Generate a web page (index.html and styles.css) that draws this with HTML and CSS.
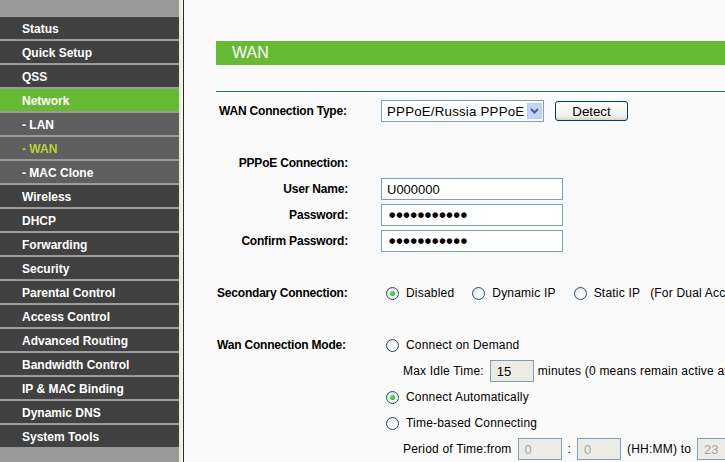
FILE: index.html
```html
<!DOCTYPE html>
<html lang="en">

<head>
    <meta charset="UTF-8">
    <title>WAN</title>
    <link rel="stylesheet" href="styles.css">
</head>

<body>
    <div class="menu">
        <div class="menu_top"></div>
        <a class="menu_item" href="#">Status</a>
        <a class="menu_item" href="#">Quick Setup</a>
        <a class="menu_item" href="#">QSS</a>
        <a class="menu_item menu_active" href="#">Network</a>
        <a class="menu_item menu_sub" href="#">- LAN</a>
        <a class="menu_item menu_sub sub_active" href="#">- WAN</a>
        <a class="menu_item menu_sub" href="#">- MAC Clone</a>
        <a class="menu_item" href="#">Wireless</a>
        <a class="menu_item" href="#">DHCP</a>
        <a class="menu_item" href="#">Forwarding</a>
        <a class="menu_item" href="#">Security</a>
        <a class="menu_item" href="#">Parental Control</a>
        <a class="menu_item" href="#">Access Control</a>
        <a class="menu_item" href="#">Advanced Routing</a>
        <a class="menu_item" href="#">Bandwidth Control</a>
        <a class="menu_item" href="#">IP &amp; MAC Binding</a>
        <a class="menu_item" href="#">Dynamic DNS</a>
        <a class="menu_item" href="#">System Tools</a>
    </div>
    <div class="menu_edge"></div>

    <div class="main">
        <div class="panel">
            <div class="panel_title">WAN</div>
            <div class="panel_line"></div>

            <div class="row">
                <div class="label left">WAN Connection Type:</div>
                <div class="field">
                    <div class="select">
                        <span class="select_text">PPPoE/Russia PPPoE</span>
                        <span class="select_btn">
                            <svg width="9" height="6" viewBox="0 0 9 6">
                                <polyline points="1,1 4.5,4.5 8,1" fill="none" stroke="#4d6185" stroke-width="2" />
                            </svg>
                        </span>
                    </div>
                    <button type="button" class="btn">Detect</button>
                </div>
            </div>
            <div class="row"></div>

            <div class="row">
                <div class="label">PPPoE Connection:</div>
            </div>
            <div class="row">
                <div class="label">User Name:</div>
                <div class="field"><input class="text" type="text" value="U000000"></div>
            </div>
            <div class="row">
                <div class="label">Password:</div>
                <div class="field"><div class="text dots">●●●●●●●●●●●</div></div>
            </div>
            <div class="row">
                <div class="label">Confirm Password:</div>
                <div class="field"><div class="text dots">●●●●●●●●●●●</div></div>
            </div>
            <div class="row"></div>

            <div class="row">
                <div class="label flush">Secondary Connection:</div>
                <div class="field">
                    <span class="radio checked"></span><span class="opt">Disabled</span>
                    <span class="radio"></span><span class="opt">Dynamic IP</span>
                    <span class="radio"></span><span class="opt">Static IP</span>
                    <span class="note">(For Dual Access/Russia PPPoE)</span>
                </div>
            </div>
            <div class="row"></div>

            <div class="row">
                <div class="label flush">Wan Connection Mode:</div>
                <div class="field">
                    <span class="radio"></span><span class="opt">Connect on Demand</span>
                </div>
            </div>
            <div class="row">
                <div class="label"></div>
                <div class="field sub">
                    Max Idle Time:
                    <input class="small idle" type="text" value="15">
                    minutes (0 means remain active at all times.)
                </div>
            </div>
            <div class="row">
                <div class="label"></div>
                <div class="field">
                    <span class="radio checked"></span><span class="opt">Connect Automatically</span>
                </div>
            </div>
            <div class="row">
                <div class="label"></div>
                <div class="field">
                    <span class="radio"></span><span class="opt">Time-based Connecting</span>
                </div>
            </div>
            <div class="row">
                <div class="label"></div>
                <div class="field sub">
                    Period of Time:from
                    <input class="small off" type="text" value="0" disabled>
                    <span class="colon">:</span>
                    <input class="small off" type="text" value="0" disabled>
                    <span class="colon">(HH:MM) to</span>
                    <input class="small off" type="text" value="23" disabled>
                </div>
            </div>
        </div>
    </div>
</body>

</html>
```

FILE: styles.css
```css
html,
body {
    margin: 0;
    padding: 0;
    height: 100%;
    overflow: hidden;
}

body {
    display: flex;
    font-family: "Liberation Sans", Arial, sans-serif;
    font-size: 12px;
    letter-spacing: 0.2px;
    color: #000;
    background: #fafafa;
}

/* left menu */
.menu {
    width: 179px;
    flex: none;
    background: #999;
}

.menu_top {
    height: 15px;
}

.menu_item {
    display: block;
    height: 21px;
    line-height: 22px;
    padding: 1px 0 0 22px;
    border-top: 2px solid #9a9a9a;
    background: #414141;
    color: #fff;
    font-weight: bold;
    letter-spacing: 0;
    text-decoration: none;
}

.menu_active {
    background: #66b933;
}

.menu_sub {
    background: #5f5f5f;
}

.sub_active {
    color: #b5d334;
}

.menu_edge {
    width: 2px;
    flex: none;
    background: #ebe8d3;
    border-right: 2px solid #f6f5ec;
}

/* content */
.main {
    flex: 1;
    border-left: 1px solid #2a2a2a;
    overflow: hidden;
}

.panel {
    margin: 41px 0 0 32px;
}

.panel_title {
    height: 24px;
    line-height: 24px;
    padding-left: 16px;
    background: #66b933;
    color: #fff;
    font-size: 16px;
    letter-spacing: 0;
}

.panel_line {
    height: 1px;
    margin: 26px 0 6px;
    background: #2f7450;
}

.row {
    display: flex;
    align-items: center;
    height: 26px;
    white-space: nowrap;
}

.label {
    width: 132px;
    flex: none;
    text-align: right;
    font-weight: bold;
    letter-spacing: -0.2px;
}

.label.left {
    text-align: left;
    padding-left: 3px;
    box-sizing: border-box;
}

.label.flush {
    text-align: left;
    padding-left: 1px;
    box-sizing: border-box;
}

.field {
    display: flex;
    align-items: center;
    margin-left: 33px;
}

.field.sub {
    padding-left: 22px;
}

/* controls */
.select {
    display: flex;
    align-items: center;
    justify-content: space-between;
    width: 163px;
    height: 22px;
    box-sizing: border-box;
    border: 1px solid #7f9db9;
    background: #fff;
    font-size: 13.3px;
}

.select_text {
    padding-left: 5px;
}

.select_btn {
    display: flex;
    align-items: center;
    justify-content: center;
    width: 15px;
    height: 16px;
    margin-right: 1px;
    background: #c3d3fd;
    border: 1px solid #b9cbf3;
    box-sizing: border-box;
}

.btn {
    width: 73px;
    height: 20px;
    margin-left: 11px;
    padding: 0;
    border: 1px solid #003c74;
    border-radius: 3px;
    background: linear-gradient(#ffffff, #f0f0ea 80%, #d6d0c5);
    font-family: "Liberation Sans", Arial, sans-serif;
    font-size: 13.3px;
    color: #000;
}

.text {
    width: 182px;
    height: 22px;
    box-sizing: border-box;
    margin: 0;
    padding: 0 5px;
    border: 1px solid #7f9db9;
    background: #fff;
    font-family: "Liberation Sans", Arial, sans-serif;
    font-size: 13px;
    color: #000;
}

.dots {
    line-height: 20px;
    padding-left: 7px;
    font-family: "DejaVu Sans", sans-serif;
    font-size: 7.3px;
    letter-spacing: 0.8px;
}

.small {
    width: 44px;
    height: 22px;
    box-sizing: border-box;
    margin: 0 4px 0 0;
    padding: 0 6px;
    border: 1px solid #7f9db9;
    background: #ecebe5;
    font-family: "Liberation Sans", Arial, sans-serif;
    font-size: 13px;
    color: #000;
}

.idle {
    margin-left: 6px;
}

.off {
    margin-left: 6px;
    color: #a5a5a5;
}

.colon {
    margin-left: 2px;
}

.radio {
    position: relative;
    width: 11px;
    height: 11px;
    margin: 1px 7px 0 5px;
    border: 1px solid #1c5180;
    border-radius: 50%;
    background: radial-gradient(circle at 65% 65%, #ffffff 20%, #dcdcd6 90%);
    flex: none;
}

.radio.checked::after {
    content: '';
    position: absolute;
    left: 3px;
    top: 3px;
    width: 5px;
    height: 5px;
    border-radius: 50%;
    background: radial-gradient(circle at 40% 40%, #61e061, #1f9a1f);
}

.opt {
    margin-right: 13px;
}

.note {
    margin-left: -3px;
}
```
